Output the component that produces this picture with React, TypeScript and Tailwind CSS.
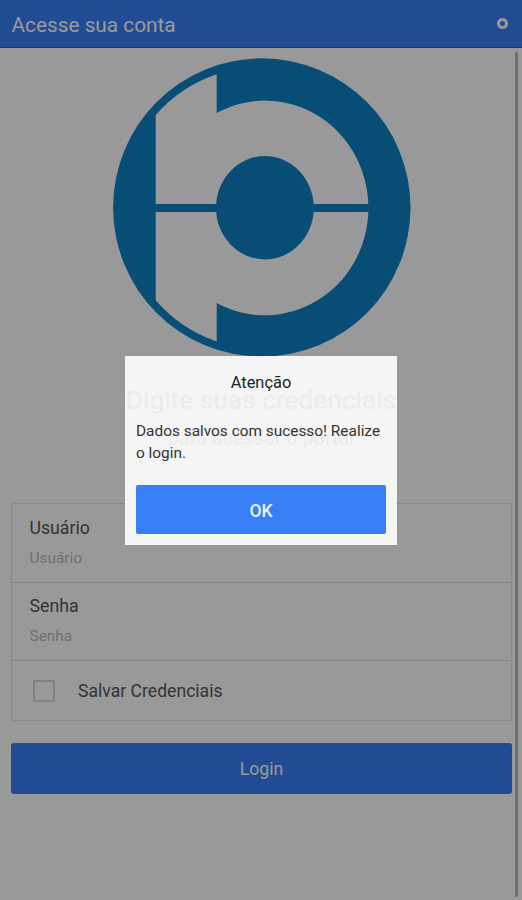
import React, { useState } from "react";

interface FieldProps {
  label: string;
  value: string;
  type?: string;
  onChange: (value: string) => void;
}

function Field({ label, value, type = "text", onChange }: FieldProps) {
  return (
    <label className="flex h-[78px] flex-col border-b border-[#e0e0e0] pt-[11px] pl-[17.5px]">
      <span className="h-[27px] text-[17.7px] leading-[24px] text-[#585858]">{label}</span>
      <input
        type={type}
        value={value}
        placeholder={label}
        onChange={(e) => onChange(e.target.value)}
        className="h-[30px] w-full bg-transparent text-[15.4px] text-[#585858] outline-none placeholder:text-[#bbb]"
      />
    </label>
  );
}

function Logo() {
  return (
    <svg viewBox="0 0 320 310" className="h-[310px] w-[320px] shrink-0">
      <ellipse cx="161.8" cy="157.5" rx="148.7" ry="149.2" fill="#0d80c4" />
      <path
        d="M55.7 65A140.7 140.7 0 0 1 116.7 24.3V62.9A103.5 107 0 0 1 268.3 154H55.7ZM55.7 162H268.3A103.5 107 0 0 1 116.7 253V291.5A140.7 140.7 0 0 1 55.7 250.3Z"
        fill="#fff"
      />
      <ellipse cx="164.9" cy="157.7" rx="48.9" ry="51.7" fill="#0d80c4" />
    </svg>
  );
}

export default function App() {
  const [user, setUser] = useState("");
  const [password, setPassword] = useState("");
  const [save, setSave] = useState(false);
  const [showAlert, setShowAlert] = useState(true);

  return (
    <div className="relative h-[900px] w-[522px] overflow-hidden bg-white font-[Roboto,sans-serif]">
      <header className="flex h-12 items-center justify-between border-b border-[#0c60ee] bg-[#387ef5] pr-[14px] pl-[11.5px] text-white">
        <h1 className="pt-[3px] text-[20.8px] leading-none">Acesse sua conta</h1>
        <button aria-label="Opções" className="h-[11px] w-[11px] rounded-full border-[3px] border-white" />
      </header>

      <main className="flex h-[852px] flex-col">
        <div className="mt-[2px] flex pl-[100px]">
          <Logo />
        </div>

        {/* Intro text */}
        <div className="flex h-[143px] flex-col items-center pt-[21px] text-[#666]">
          <h2 className="text-[26.3px] leading-[38px] whitespace-nowrap">Digite suas credenciais</h2>
          <h3 className="mt-[3px] text-[19.8px] leading-[34px] whitespace-nowrap">para acessar o portal</h3>
        </div>

        <form className="mr-[10px] ml-[11px]" onSubmit={(e) => e.preventDefault()}>
          <div className="h-[218px] border border-[#e6e6e6] pt-px">
            <Field label="Usuário" value={user} onChange={setUser} />
            <Field label="Senha" type="password" value={password} onChange={setPassword} />
            <label className="flex h-[59px] items-center pl-[21px]">
              <input
                type="checkbox"
                checked={save}
                onChange={(e) => setSave(e.target.checked)}
                className="h-[22px] w-[22px] appearance-none rounded-[2px] border-2 border-[#d8d8d8] checked:bg-[#387ef5]"
              />
              <span className="ml-[23px] pt-px text-[17.6px] text-[#585858]">Salvar Credenciais</span>
            </label>
          </div>
          <button className="mt-[22px] h-[51px] w-full rounded-[3px] bg-[#387ef5] pt-[2px] text-[17.6px] text-white">Login</button>
        </form>
      </main>

      {/* Scroll indicator */}
      <div className="absolute top-[52px] right-1 h-[845px] w-[3px] rounded-full bg-[#b8b8b8]" />

      {showAlert && (
        <div className="absolute inset-0 flex items-center justify-center bg-black/40">
          <div className="relative h-[189px] w-[272px] bg-white/90 px-[11px]">
            <h3 className="pt-[16px] text-center text-[16.4px] leading-[22px] text-[#222]">Atenção</h3>
            <p className="mt-[26px] text-[15.4px] leading-[22px] text-[#333]">
              Dados salvos com sucesso! Realize o login.
            </p>
            <button
              onClick={() => setShowAlert(false)}
              className="mt-[21px] block h-[49px] w-full rounded-[2px] bg-[#387ef5] pt-[4px] text-[17.6px] font-medium text-white/90"
            >
              OK
            </button>
          </div>
        </div>
      )}
    </div>
  );
}
